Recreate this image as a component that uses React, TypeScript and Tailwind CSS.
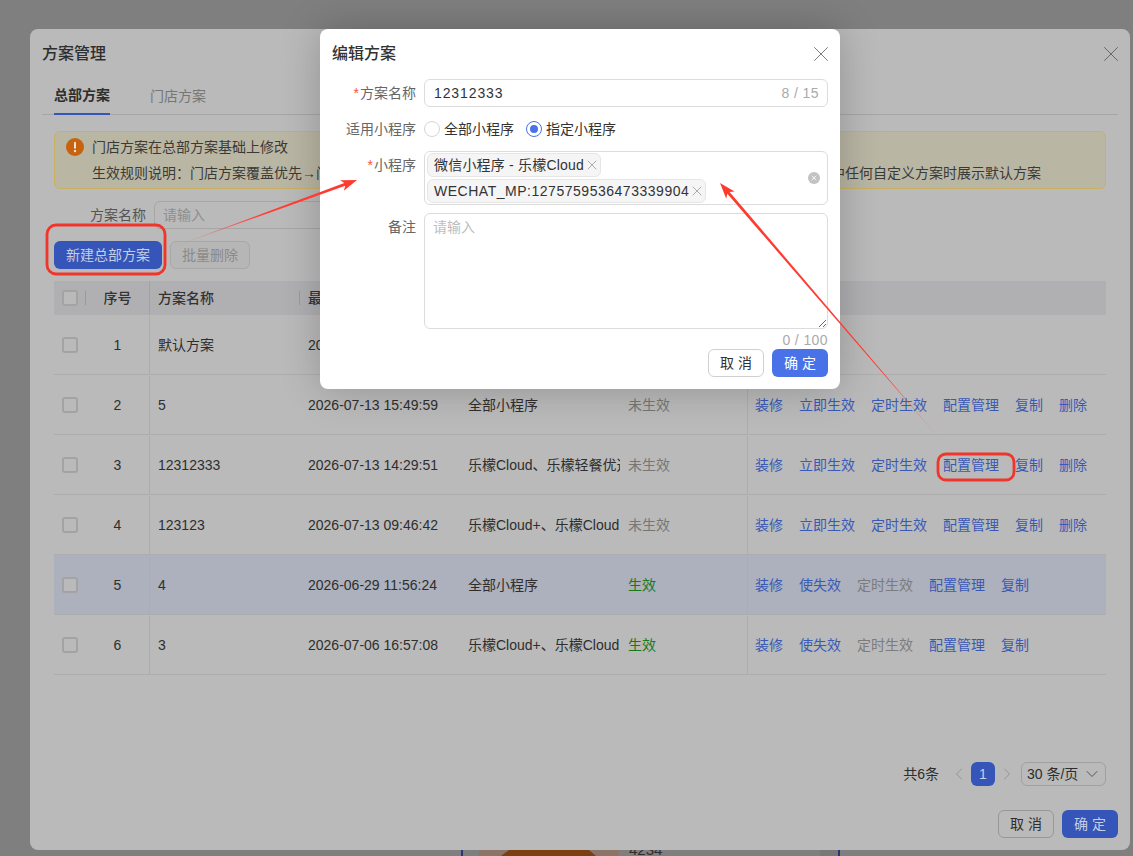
import { ChevronDown, ChevronLeft, ChevronRight, X } from "lucide-react";

const rows = [
  { id: 1, name: "默认方案", time: "2026-07-13 15:49:59", apps: "全部小程序", on: true, ops: [] as string[] },
  { id: 2, name: "5", time: "2026-07-13 15:49:59", apps: "全部小程序", on: false, ops: ["装修", "立即生效", "定时生效", "配置管理", "复制", "删除"] },
  { id: 3, name: "12312333", time: "2026-07-13 14:29:51", apps: "乐檬Cloud、乐檬轻餐优选", on: false, ops: ["装修", "立即生效", "定时生效", "配置管理", "复制", "删除"] },
  { id: 4, name: "123123", time: "2026-07-13 09:46:42", apps: "乐檬Cloud+、乐檬Cloud", on: false, ops: ["装修", "立即生效", "定时生效", "配置管理", "复制", "删除"] },
  { id: 5, name: "4", time: "2026-06-29 11:56:24", apps: "全部小程序", on: true, active: true, ops: ["装修", "使失效", "定时生效", "配置管理", "复制"] },
  { id: 6, name: "3", time: "2026-07-06 16:57:08", apps: "乐檬Cloud+、乐檬Cloud", on: true, ops: ["装修", "使失效", "定时生效", "配置管理", "复制"] },
];

const columns = "grid grid-cols-[32px_64px_150px_160px_160px_127px_359px]";

function Box() {
  return <span className="block h-4 w-4 rounded-[3px] border-2 border-[#a3a3a3] bg-[#bababa]" />;
}

function arrowPoints(x1: number, y1: number, x2: number, y2: number) {
  const len = Math.hypot(x2 - x1, y2 - y1);
  const dx = (x2 - x1) / len;
  const dy = (y2 - y1) / len;
  const at = (back: number, side: number) =>
    `${x2 - dx * back - dy * side},${y2 - dy * back + dx * side}`;
  return [
    `${x1},${y1}`,
    at(13, 1.5),
    at(16, 5.5),
    `${x2},${y2}`,
    at(16, -5.5),
    at(13, -1.5),
  ].join(" ");
}

function Annotations() {
  return (
    <svg className="pointer-events-none absolute inset-0 z-30" width="1133" height="856">
      <defs>
        <linearGradient id="fadeA" gradientUnits="userSpaceOnUse" x1="178" y1="245" x2="270" y2="212">
          <stop offset="0" stopColor="#ff3b30" stopOpacity="0.15" />
          <stop offset="1" stopColor="#ff3b30" />
        </linearGradient>
        <linearGradient id="fadeB" gradientUnits="userSpaceOnUse" x1="944" y1="444" x2="880" y2="370">
          <stop offset="0" stopColor="#ff3b30" stopOpacity="0.15" />
          <stop offset="1" stopColor="#ff3b30" />
        </linearGradient>
      </defs>
      <rect x="47" y="225" width="118" height="49" rx="9" fill="none" stroke="#f0352b" strokeWidth="2.8" />
      <rect x="938" y="454" width="76" height="26" rx="8" fill="none" stroke="#f0352b" strokeWidth="2.8" />
      <polygon points={arrowPoints(178, 245, 357, 180)} fill="url(#fadeA)" />
      <polygon points={arrowPoints(944, 444, 720, 183)} fill="url(#fadeB)" />
    </svg>
  );
}

function EditModal() {
  return (
    <div className="absolute left-[320px] top-[29px] z-20 h-[360px] w-[520px] rounded-lg bg-white px-3 shadow-[0_0_40px_rgba(0,0,0,0.22)]">
      <div className="flex h-[50px] items-center justify-between">
        <span className="text-base font-medium text-[#333]">编辑方案</span>
        <X size={26} strokeWidth={0.9} className="mr-[-6px] text-[#777]" />
      </div>
      <div className="grid grid-cols-[84px_404px] gap-x-2 gap-y-2 text-sm">
        <label className="h-7 text-right leading-7 text-[#666]">
          <span className="mr-px text-[#f5524a]">*</span>方案名称
        </label>
        <div className="flex h-7 items-center rounded-md border border-[#dcdcdc] pl-[9px] pr-2">
          <input
            readOnly
            value="12312333"
            className="min-w-0 flex-1 bg-transparent tracking-[0.9px] text-[#333] outline-none"
          />
          <span className="tracking-[0.4px] text-[#aaa]">8 / 15</span>
        </div>

        <label className="h-7 text-right leading-7 text-[#666]">适用小程序</label>
        <div className="flex h-7 items-center text-[#333]">
          <span className="h-4 w-4 rounded-full border border-[#d4d4d4]" />
          <span className="ml-1">全部小程序</span>
          <span className="ml-3 flex h-4 w-4 items-center justify-center rounded-full border border-[#4a72e8]">
            <span className="h-2 w-2 rounded-full bg-[#4a72e8]" />
          </span>
          <span className="ml-1">指定小程序</span>
        </div>

        <label className="h-7 text-right leading-7 text-[#666]">
          <span className="mr-px text-[#f5524a]">*</span>小程序
        </label>
        <div className="flex h-[54px] items-center rounded-md border border-[#dcdcdc] pl-[2px] pr-[7px]">
          <div className="flex flex-1 flex-col items-start gap-[2px]">
            <span className="flex h-6 items-center rounded-md border border-[#e6e6e6] bg-[#f5f5f5] pl-[6px] tracking-[0.2px] text-[#333]">
              微信小程序 - 乐檬Cloud
              <X size={16} strokeWidth={1} className="text-[#888]" />
            </span>
            <span className="flex h-6 items-center rounded-md border border-[#e6e6e6] bg-[#f5f5f5] pl-[6px] tracking-[0.52px] text-[#333]">
              WECHAT_MP:1275759536473339904
              <X size={16} strokeWidth={1} className="text-[#888]" />
            </span>
          </div>
          <span className="flex h-3 w-3 items-center justify-center rounded-full bg-[#c2c2c2]">
            <X size={8} strokeWidth={2.5} className="text-white" />
          </span>
        </div>

        <label className="h-7 text-right leading-7 text-[#666]">备注</label>
        <textarea
          readOnly
          placeholder="请输入"
          className="block h-[116px] rounded-md border border-[#dcdcdc] px-2 py-[3px] text-sm leading-[20px] outline-none placeholder:text-[#bdbdbd]"
        />
      </div>
      <div className="h-5 text-right text-sm leading-[22px] tracking-[0.4px] text-[#aaa]">0 / 100</div>
      <div className="flex justify-end gap-2 text-sm">
        <span className="flex h-7 w-14 items-center justify-center rounded-md border border-[#d0d0d0] text-[#333]">取 消</span>
        <span className="flex h-7 w-14 items-center justify-center rounded-md bg-[#4a72e8] text-white">确 定</span>
      </div>
    </div>
  );
}

function PlanTable() {
  return (
    <div className="mt-3 text-sm">
      <div className={`${columns} h-[34px] items-center bg-[#b0b0b2] font-medium text-[#333]`}>
        <div className="flex h-full items-center justify-between pl-2">
          <Box />
          <span className="h-[14px] w-px bg-[#9a9a9a]" />
        </div>
        <div className="flex h-full items-center justify-center border-r border-[#a2a2a2]">序号</div>
        <div className="flex h-full items-center justify-between pl-2">
          方案名称
          <span className="h-[14px] w-px bg-[#9a9a9a]" />
        </div>
        <div className="pl-2">最后修改时间</div>
        <div className="pl-2">适用小程序</div>
        <div className="pl-2">状态</div>
        <div className="pl-2">操作</div>
      </div>
      {rows.map((row) => (
        <div
          key={row.id}
          className={`${columns} h-[60px] items-center border-b border-[#adadad] text-[#2e2e2e] ${row.active ? "bg-[#adb0bd]" : ""}`}
        >
          <div className="pl-2 pt-px">
            <Box />
          </div>
          <div className="mt-px flex h-[58px] items-center justify-center self-start border-r border-[#adadad]">{row.id}</div>
          <div className="pl-2">{row.name}</div>
          <div className="pl-2">{row.time}</div>
          <div className="overflow-hidden whitespace-nowrap pl-2">{row.apps}</div>
          <div className={`pl-2 ${row.on ? "text-[#16791a]" : "text-[#767676]"}`}>{row.on ? "生效" : "未生效"}</div>
          <div className="mt-px flex h-[58px] items-center gap-4 self-start border-l border-[#adadad] pl-[7px] text-[#3a59b5]">
            {row.ops.map((op, i) => (
              <span key={i} className={op === "定时生效" && row.on ? "text-[#7c7c7c]" : ""}>
                {op}
              </span>
            ))}
          </div>
        </div>
      ))}
    </div>
  );
}

function ManagePanel() {
  return (
    <div className="relative z-10 flex h-[821px] w-[1100px] flex-col rounded-lg bg-[#bababa]">
      <div className="flex h-12 shrink-0 items-center justify-between px-3 pt-[2px]">
        <span className="text-base font-medium text-[#2e2e2e]">方案管理</span>
        <X size={26} strokeWidth={0.9} className="mr-[-6px] text-[#666]" />
      </div>
      <div className="mx-3 flex h-[38px] shrink-0 gap-10 border-b border-[#a6a6a8] pl-3 text-sm">
        <span className="flex h-[38px] items-center border-b-2 border-[#3555b8] font-semibold text-[#2e2e2e]">总部方案</span>
        <span className="flex h-[37px] items-center text-[#767676]">门店方案</span>
      </div>

      <div className="px-6">
        <div className="mt-4 flex h-[58px] gap-2 rounded-md border border-[#c9b161] bg-[#bab6a4] pl-[11px] pt-[2px] text-sm leading-[26px] text-[#3a3a36]">
          <svg width="18" height="18" viewBox="0 0 18 18" className="mt-1 shrink-0">
            <circle cx="9" cy="9" r="9" fill="#c9620c" />
            <rect x="8" y="3.8" width="2" height="7" rx="1" fill="#e8e4d8" />
            <circle cx="9" cy="13" r="1.2" fill="#e8e4d8" />
          </svg>
          <div className="whitespace-nowrap">
            <div>门店方案在总部方案基础上修改</div>
            <div>
              生效规则说明：门店方案覆盖优先→门店未生效方案时展示总部生效方案→门店与总部方案均未生效，或总部未配置其
              <span className="ml-[11px]">中任何自定义方案时展示默认方案</span>
            </div>
          </div>
        </div>

        <div className="mt-3 flex h-7 items-center gap-2 text-sm">
          <span className="w-[92px] text-right text-[#555]">方案名称</span>
          <span className="flex h-7 w-[220px] items-center rounded-md border border-[#a6a6a6] px-2 text-[#8e8e8e]">请输入</span>
        </div>

        <div className="mt-3 flex gap-2 text-sm">
          <span className="flex h-7 w-[108px] items-center justify-center rounded-md bg-[#3555b8] text-[#c6cde6]">新建总部方案</span>
          <span className="flex h-7 w-20 items-center justify-center rounded-md border border-[#a8a8a8] bg-[#b6b6b6] text-[#8a8a8a]">批量删除</span>
        </div>

        <PlanTable />

        <div className="mt-[87px] flex h-6 items-center justify-end text-sm text-[#2e2e2e]">
          <span>共6条</span>
          <ChevronLeft size={20} strokeWidth={1} className="ml-[10px] text-[#8c8c8c]" />
          <span className="ml-[2px] flex h-6 w-6 items-center justify-center rounded-md bg-[#3555b8] text-[#c6cde6]">1</span>
          <ChevronRight size={20} strokeWidth={1} className="ml-[2px] text-[#8c8c8c]" />
          <span className="ml-1 flex h-6 w-[85px] items-center justify-between rounded-md border border-[#a0a0a0] pl-[5px] pr-[3px]">
            30 条/页
            <ChevronDown size={20} strokeWidth={1.2} className="text-[#555]" />
          </span>
        </div>
      </div>

      <div className="mt-6 flex justify-end gap-2 px-3 text-sm">
        <span className="flex h-7 w-14 items-center justify-center rounded-md border border-[#989898] text-[#2e2e2e]">取 消</span>
        <span className="flex h-7 w-14 items-center justify-center rounded-md bg-[#3555b8] text-[#c6cde6]">确 定</span>
      </div>
    </div>
  );
}

export default function App() {
  return (
    <div className="relative h-[856px] w-[1133px] overflow-hidden bg-[#7f7f7f] pl-[30px] pt-[29px] font-['Liberation_Sans','Noto_Sans_CJK_SC',sans-serif]">
      <ManagePanel />
      {/* page behind the dialogs, only its last pixels show */}
      <div className="flex h-[6px] pl-[431px]">
        <span className="h-full w-[2px] bg-[#24367c]" />
        <div className="ml-[16px] h-full w-[140px] bg-[#8c7468]">
          <svg width="140" height="6" viewBox="0 0 140 6">
            <polygon points="30,0 110,0 117,6 22,6" fill="#7b3f12" />
          </svg>
        </div>
        <span className="-mt-[8px] ml-[10px] text-[15px] leading-[16px] text-[#2e2e2e]">4234</span>
        <span className="ml-[158px] h-full w-[18px] bg-[#787878]" />
        <span className="h-full w-[2px] bg-[#24367c]" />
      </div>
      <EditModal />
      <Annotations />
    </div>
  );
}
